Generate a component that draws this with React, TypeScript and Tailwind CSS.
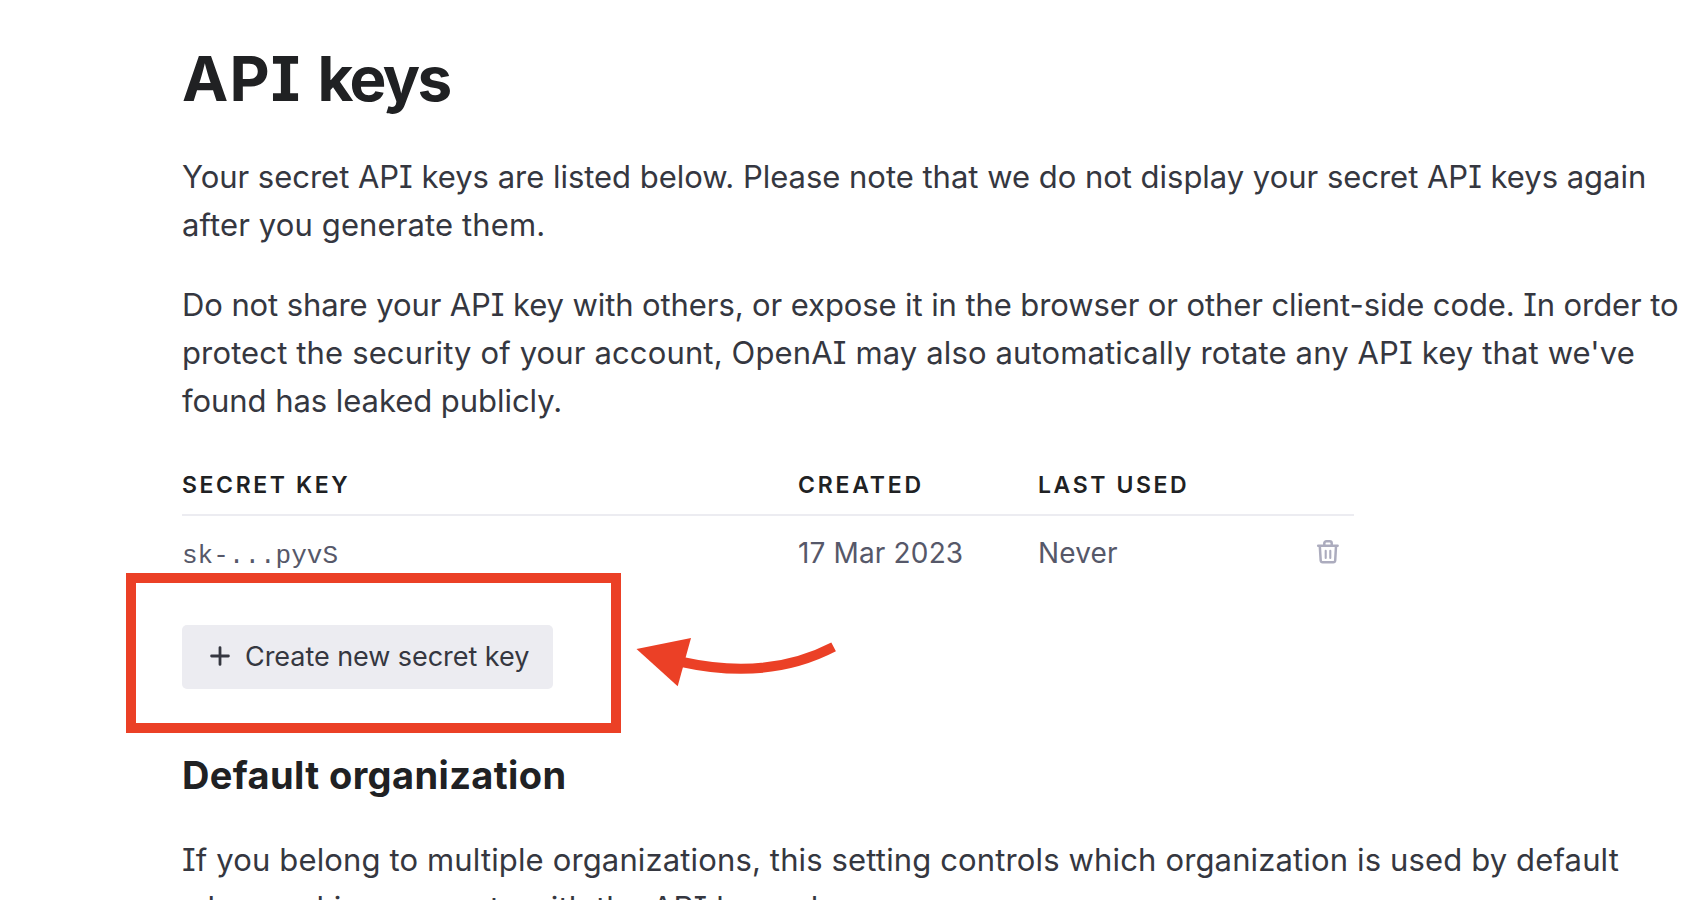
function TrashIcon() {
  return (
    <svg width="24" height="26" viewBox="0 0 24 26" fill="none" stroke="#acacbe" strokeLinecap="round" strokeLinejoin="round">
      <path d="M2.2 6.8H21.6" strokeWidth="2.5" />
      <path d="M8.3 6.3V4.2a2 2 0 0 1 2-2h3.4a2 2 0 0 1 2 2v2.1" strokeWidth="2.5" />
      <path d="M3.8 7.2l.9 14.3a2 2 0 0 0 2 1.8h10.5a2 2 0 0 0 2-1.8L20 7.2" strokeWidth="2.5" />
      <path d="M9.7 11.7v7.2M14.3 11.7v7.2" strokeWidth="2.1" />
    </svg>
  );
}

function PlusIcon() {
  return (
    <svg width="20" height="20" viewBox="0 0 20 20" fill="none" stroke="#353740" strokeWidth="2.8" strokeLinecap="round">
      <path d="M10 1.6v16.8M1.6 10h16.8" />
    </svg>
  );
}

function KeyTable() {
  return (
    <div className="mt-[44px] w-[1172px]">
      <div className="grid grid-cols-[616px_240px_1fr] border-b-2 border-[#ececf1] pb-[13px] text-[23px] leading-8 font-semibold tracking-[2.6px] text-[#202123]">
        <div>SECRET KEY</div>
        <div className="tracking-[2.8px]">CREATED</div>
        <div>LAST USED</div>
      </div>
      <div className="grid h-[72px] grid-cols-[616px_240px_1fr_40px] items-center pt-px text-[28px] tracking-[0.15px] text-[#565869]">
        <div className="pt-1.5 font-['Liberation_Mono',monospace] text-[26px] tracking-normal">sk-...pyvS</div>
        <div>17 Mar 2023</div>
        <div>Never</div>
        <div className="pb-0.5 pl-0.5"><TrashIcon /></div>
      </div>
    </div>
  );
}

export default function App() {
  return (
    <main className="relative h-[900px] w-[1706px] overflow-hidden bg-white pt-[43px] pl-[182px] font-['Inter',sans-serif] text-[31px] leading-[48px] text-[#353740] [font-feature-settings:'cv08']">
      <h1 className="text-[62px] leading-[72px] font-bold text-[#202123]">
        <span className="tracking-[1.2px]">API </span>
        <span className="tracking-[-2.6px]">keys</span>
      </h1>
      <p className="mt-[38px] whitespace-nowrap">
        <span className="tracking-[-0.02px]">
          Your secret API keys are listed below. Please note that we do not display your secret API keys again
        </span>
        <br />
        <span className="tracking-[0.12px]">after you generate them.</span>
      </p>
      <p className="mt-8 whitespace-nowrap">
        <span className="tracking-[-0.1px]">
          Do not share your API key with others, or expose it in the browser or other client-side code. In order to
        </span>
        <br />
        <span className="tracking-[0.14px]">
          protect the security of your account, OpenAI may also automatically rotate any API key that we've
        </span>
        <br />
        <span className="tracking-[-0.05px]">found has leaked publicly.</span>
      </p>
      <KeyTable />
      <button className="mt-[37px] flex h-16 w-[371px] items-center gap-[15px] rounded-[5px] bg-[#ececf1] pl-7 text-[27px] tracking-[-0.05px] whitespace-nowrap">
        <span className="-mt-0.5">
          <PlusIcon />
        </span>
        Create new secret key
      </button>
      <h2 className="mt-[62px] text-[38px] leading-[48px] font-bold tracking-[0.38px] text-[#202123]">
        Default organization
      </h2>
      <p className="mt-[37px] whitespace-nowrap">
        <span className="tracking-[0.14px]">
          If you belong to multiple organizations, this setting controls which organization is used by default
        </span>
        <br />
        <span className="tracking-[0.16px]">when making requests with the API keys above.</span>
      </p>

      <div className="absolute top-[573px] left-[126px] h-[160px] w-[495px] border-10 border-[#eb4026]" />
      <svg className="absolute top-[620px] left-[620px]" width="240" height="80" viewBox="620 620 240 80">
        <path d="M682 662Q768 681 833.6 646.9" fill="none" stroke="#eb4026" strokeWidth="10" />
        <path d="M636.5 649L691 638L677.7 686.3Z" fill="#eb4026" />
      </svg>
    </main>
  );
}
